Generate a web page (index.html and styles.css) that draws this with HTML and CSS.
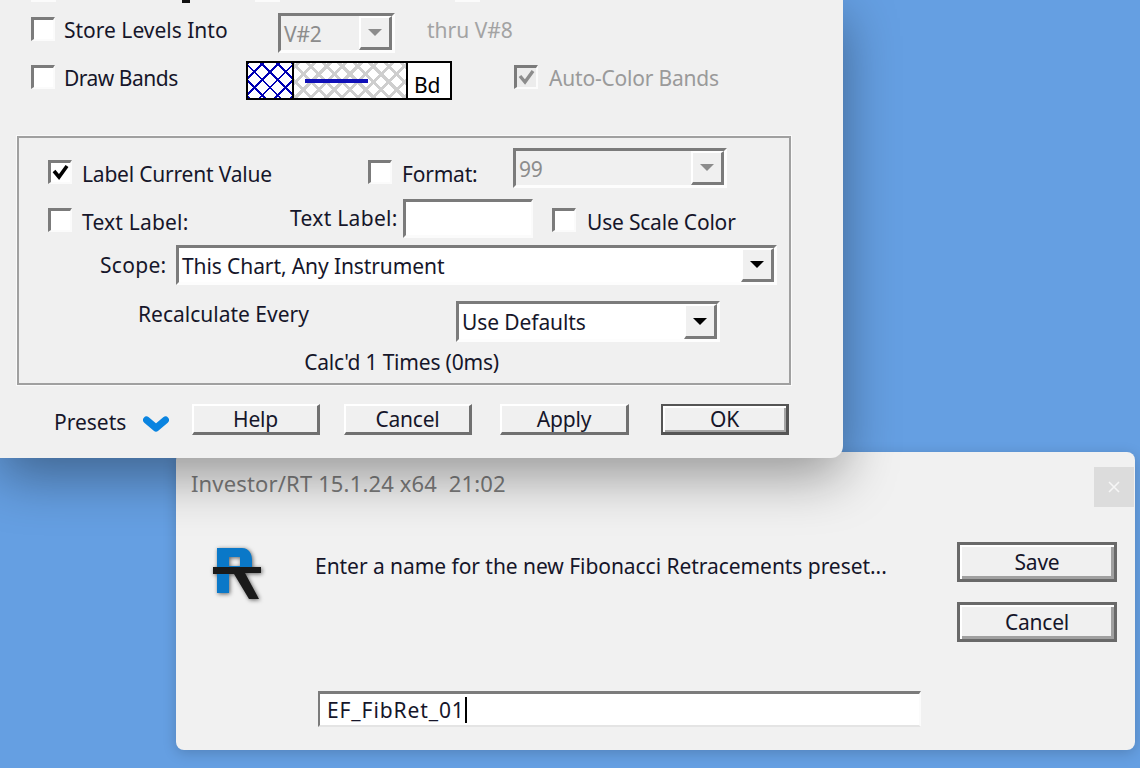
FILE: index.html
```html
<!DOCTYPE html>
<html>

<head>
    <title>Fibonacci Retracements</title>
    <link rel="stylesheet" href="styles.css">
</head>

<body>
    <div class="dialog">
        <div class="titlebar">
            <span class="title">Investor/RT 15.1.24 x64  21:02</span>
            <div class="close">
                <svg width="12" height="12" viewBox="0 0 12 12"><path d="M1 1L11 11M11 1L1 11" stroke="#f6f6f6" stroke-width="1.6" /></svg>
            </div>
        </div>
        <div class="dialog-body">
            <svg class="logo" width="60" height="64" viewBox="0 0 60 64">
                <path fill="#0a78c8" fill-rule="evenodd" d="M9 6H34C41 6 44 12 44 18V26H21V51H9ZM21 15V24H32V15Z" />
                <path fill="#1a1a1a" d="M5 25H53V31H37L51 57H41L26 32H5Z" />
            </svg>
            <div class="message">Enter a name for the new Fibonacci Retracements preset...</div>
            <div class="dialog-buttons">
                <button class="btn-strong">Save</button>
                <button class="btn-strong">Cancel</button>
            </div>
        </div>
        <div class="name-input">EF_FibRet_01<span class="caret"></span></div>
    </div>

    <div class="study-window">
        <div class="cut-row">
            <span class="cut cut-a"></span>
            <span class="cut-tail"></span>
            <span class="cut cut-b"></span>
            <span class="cut cut-c"></span>
        </div>

        <div class="row row-store">
            <span class="check check-up"></span>
            <span class="label label-store">Store Levels Into</span>
            <div class="combo combo-store disabled">
                <span class="combo-text">V#2</span>
                <span class="combo-btn"><i class="arrow"></i></span>
            </div>
            <span class="label label-thru">thru V#8</span>
        </div>

        <div class="row row-bands">
            <span class="check check-up"></span>
            <span class="label label-bands">Draw Bands</span>
            <div class="swatch">
                <div class="swatch-fill"></div>
                <div class="swatch-line"><span class="line"></span></div>
                <div class="swatch-text">Bd</div>
            </div>
            <span class="check check-up check-auto disabled">
                <svg width="19" height="19" viewBox="0 0 19 19"><path d="M3 8L8 14L16 3" fill="none" stroke="#8c8c8c" stroke-width="3.4" /></svg>
            </span>
            <span class="label label-auto">Auto-Color Bands</span>
        </div>

        <div class="group">
            <div class="row group-row1">
                <span class="check">
                    <svg width="19" height="19" viewBox="0 0 19 19"><path d="M3 8L8 14L16 3" fill="none" stroke="#000" stroke-width="3.6" /></svg>
                </span>
                <span class="label label-current">Label Current Value</span>
                <span class="check check-format"></span>
                <span class="label label-format">Format:</span>
                <div class="combo combo-format disabled">
                    <span class="combo-text">99</span>
                    <span class="combo-btn"><i class="arrow"></i></span>
                </div>
            </div>
            <div class="row group-row2">
                <span class="check"></span>
                <span class="label label-text">Text Label:</span>
                <span class="label label-text2">Text Label:</span>
                <div class="text-box"></div>
                <span class="check check-scale"></span>
                <span class="label label-scale">Use Scale Color</span>
            </div>
            <div class="row group-row3">
                <span class="label label-scope">Scope:</span>
                <div class="combo combo-scope">
                    <span class="combo-text">This Chart, Any Instrument</span>
                    <span class="combo-btn"><i class="arrow"></i></span>
                </div>
            </div>
            <div class="row group-row4">
                <span class="label label-recalc">Recalculate Every</span>
                <div class="combo combo-recalc">
                    <span class="combo-text">Use Defaults</span>
                    <span class="combo-btn"><i class="arrow"></i></span>
                </div>
            </div>
            <div class="calc-note">Calc'd 1 Times (0ms)</div>
        </div>

        <div class="row footer">
            <span class="label label-presets">Presets</span>
            <svg class="chevron" width="26" height="18" viewBox="0 0 26 18">
                <path d="M3.5 5L13 13L22.5 5" fill="none" stroke="#0a84e0" stroke-width="7" stroke-linejoin="round" stroke-linecap="round" />
            </svg>
            <button class="btn btn-help">Help</button>
            <button class="btn btn-cancel">Cancel</button>
            <button class="btn btn-apply">Apply</button>
            <button class="btn btn-ok">OK</button>
        </div>
    </div>
</body>

</html>
```

FILE: styles.css
```css
* {
    box-sizing: border-box;
}

body {
    margin: 0;
    width: 1140px;
    height: 768px;
    overflow: hidden;
    position: relative;
    background-color: #659fe2;
    font-family: "Noto Sans", sans-serif;
    font-size: 21px;
    letter-spacing: -0.2px;
    color: #16162a;
}

/* windows on the desktop */
.study-window {
    position: absolute;
    left: 0;
    top: 0;
    width: 843px;
    height: 458px;
    background-color: #f0f0f0;
    border-bottom-right-radius: 12px;
    box-shadow: 0 18px 54px rgba(0, 0, 0, 0.38);
}

.dialog {
    position: absolute;
    left: 176px;
    top: 452px;
    width: 959px;
    height: 298px;
    background-color: #f1f1f1;
    border-radius: 8px;
    box-shadow: 0 3px 14px rgba(0, 0, 0, 0.18);
}

/* top edge slivers */
.cut-row {
    display: flex;
    height: 2px;
}

.cut {
    width: 25px;
    height: 2px;
    background-color: #fbfbfb;
}

.cut-a { margin-left: 31px; }
.cut-tail { width: 8px; height: 3px; margin-left: 126px; background-color: #111; }
.cut-b { margin-left: 65px; }
.cut-c { margin-left: 175px; }

.row {
    display: flex;
    align-items: center;
}

.label {
    white-space: nowrap;
    line-height: 28px;
}

.row-store {
    height: 39px;
    margin-top: 11px;
    padding-left: 31px;
}

.row-bands {
    height: 39px;
    margin-top: 9px;
    padding-left: 31px;
}

.label-store { margin: -6px 0 0 9px; width: 214px; letter-spacing: 0; }
.label-thru { margin: -6px 0 0 32px; color: #a3a3a3; letter-spacing: 0; }
.label-bands { margin: -6px 0 0 9px; width: 182px; letter-spacing: -0.5px; }
.label-auto { margin: -6px 0 0 11px; color: #9a9a9a; }

/* check boxes */
.check {
    flex: none;
    display: flex;
    align-items: center;
    justify-content: center;
    width: 24px;
    height: 24px;
    background-color: #fff;
    border-style: solid;
    border-width: 3px 2px 2px 3px;
    border-color: #7b7b7b #fbfbfb #fbfbfb #7b7b7b;
}

.check.disabled {
    background-color: #ececec;
}

.check-up { margin-top: -7px; }
.check-auto { margin-left: 62px; }
.check-format { margin-left: 97px; }
.check-scale { margin-left: 19px; }

.group-row1 .check { margin-top: 8px; }
.group-row2 .check { margin-top: 4px; }

/* combo boxes */
.combo {
    flex: none;
    display: flex;
    justify-content: space-between;
    height: 40px;
    background-color: #fff;
    border-style: solid;
    border-width: 3px;
    border-color: #7b7b7b #fdfdfd #fdfdfd #7b7b7b;
}

.combo.disabled {
    background-color: #f0f0f0;
    color: #8c8c8c;
}

.combo-text {
    padding-left: 3px;
    line-height: 36px;
    white-space: nowrap;
}

.combo-btn {
    flex: none;
    display: flex;
    align-items: center;
    justify-content: center;
    width: 33px;
    background-color: #f0f0f0;
    border-style: solid;
    border-width: 2px 3px 3px 2px;
    border-color: #fff #7b7b7b #7b7b7b #fff;
}

.arrow {
    width: 0;
    height: 0;
    border-left: 7px solid transparent;
    border-right: 7px solid transparent;
    border-top: 7px solid #000;
}

.disabled .arrow {
    border-top-color: #8c8c8c;
}

.combo-store { width: 117px; }
.combo-format { width: 214px; margin-left: 34px; }
.combo-scope { width: 601px; margin-left: 11px; letter-spacing: -0.1px; }
.combo-recalc { width: 264px; height: 41px; margin-left: 145px; letter-spacing: -0.1px; }

/* band colour swatch */
.swatch {
    flex: none;
    display: flex;
    width: 206px;
    height: 39px;
    border: 2px solid #000;
    background-color: #fff;
}

.swatch-fill {
    width: 46px;
    border-right: 2px solid #000;
    background-color: #fff;
    background-image:
        repeating-linear-gradient(45deg, #0000b4 0 2px, transparent 2px 11px),
        repeating-linear-gradient(-45deg, #0000b4 0 2px, transparent 2px 11px);
}

.swatch-line {
    display: flex;
    align-items: center;
    width: 114px;
    padding-left: 11px;
    border-right: 2px solid #000;
    background-image:
        repeating-linear-gradient(45deg, #cecece 0 3px, transparent 3px 11px),
        repeating-linear-gradient(-45deg, #cecece 0 3px, transparent 3px 11px);
}

.line {
    width: 63px;
    height: 4px;
    background-color: #1010b8;
}

.swatch-text {
    padding: 8px 0 0 6px;
    line-height: 28px;
    color: #000;
}

/* lower group box */
.group {
    width: 774px;
    height: 249px;
    margin: 36px 0 0 17px;
    padding-top: 10px;
    border: 2px solid #a0a0a0;
    box-shadow: 0 0 0 1px #fafafa;
}

.group-row1 {
    height: 40px;
    padding-left: 29px;
}

.group-row2 {
    height: 40px;
    margin-top: 10px;
    padding-left: 29px;
}

.group-row3 {
    height: 40px;
    margin-top: 7px;
    padding-left: 81px;
}

.group-row4 {
    height: 41px;
    margin-top: 16px;
    padding-left: 119px;
}

.label-current { margin: 12px 0 0 10px; width: 189px; }
.label-format { margin: 12px 0 0 10px; width: 77px; }
.label-text { margin: 8px 0 0 10px; width: 208px; letter-spacing: 0.2px; }
.label-text2 { width: 113px; letter-spacing: 0.3px; }
.label-scope { width: 65px; letter-spacing: 0.3px; }
.label-recalc { width: 173px; margin-top: -16px; letter-spacing: 0; }
.label-scale { margin: 8px 0 0 11px; width: 150px; }

.text-box {
    flex: none;
    width: 130px;
    height: 39px;
    background-color: #fff;
    border-style: solid;
    border-width: 3px 2px 3px 3px;
    border-color: #7b7b7b #fbfbfb #fbfbfb #7b7b7b;
}

.calc-note {
    margin-top: 6px;
    padding-right: 5px;
    text-align: center;
    line-height: 28px;
}

/* footer buttons */
.footer {
    height: 31px;
    margin-top: 19px;
    padding-left: 54px;
}

.label-presets { width: 89px; margin-top: 4px; letter-spacing: 0; }

.chevron {
    flex: none;
    margin-top: 8px;
}

button {
    font: inherit;
    letter-spacing: inherit;
    color: inherit;
    padding: 0;
    background-color: #f0f0f0;
    cursor: pointer;
}

.btn {
    width: 128px;
    height: 31px;
    line-height: 24px;
    border-style: solid;
    border-width: 2px 3px 3px 2px;
    border-color: #fff #707070 #707070 #fff;
}

.btn-help { margin-left: 23px; }
.btn-cancel { margin-left: 24px; }
.btn-apply { margin-left: 28px; width: 129px; }
.btn-ok {
    margin-left: 32px;
    border-color: #555;
    box-shadow: inset 2px 2px 0 #fff, inset -2px -2px 0 #a5a5a5;
}

/* preset name dialog */
.titlebar {
    display: flex;
    justify-content: space-between;
    height: 55px;
    padding: 15px 1px 0 15px;
}

.title {
    font-size: 22px;
    letter-spacing: 0.15px;
    line-height: 32px;
    color: #7c7c7c;
    white-space: pre;
}

.close {
    display: flex;
    align-items: center;
    justify-content: center;
    width: 40px;
    height: 40px;
    background-color: #dcdcdc;
}

.dialog-body {
    display: flex;
    height: 156px;
    padding: 35px 18px 0 32px;
}

.logo {
    flex: none;
    filter: drop-shadow(1px 1px 2px rgba(0, 0, 0, 0.6));
}

.message {
    flex: 1;
    margin: 8px 0 0 47px;
    line-height: 32px;
    letter-spacing: -0.05px;
    white-space: nowrap;
}

.dialog-buttons {
    display: flex;
    flex-direction: column;
    gap: 20px;
    flex: none;
}

.btn-strong {
    width: 160px;
    height: 40px;
    border-style: solid;
    border-width: 3px;
    border-color: #696969;
    box-shadow: inset 2px 2px 0 #fff, inset -3px -3px 0 #a0a0a0;
}

.name-input {
    display: flex;
    align-items: center;
    width: 603px;
    height: 36px;
    margin: 28px 0 0 142px;
    padding-left: 7px;
    letter-spacing: 0.9px;
    background-color: #fff;
    border-style: solid;
    border-width: 3px 2px 2px 2px;
    border-color: #7b7b7b #fbfbfb #e4e4e4 #7b7b7b;
}

.caret {
    width: 2px;
    height: 26px;
    background-color: #000;
}
```
